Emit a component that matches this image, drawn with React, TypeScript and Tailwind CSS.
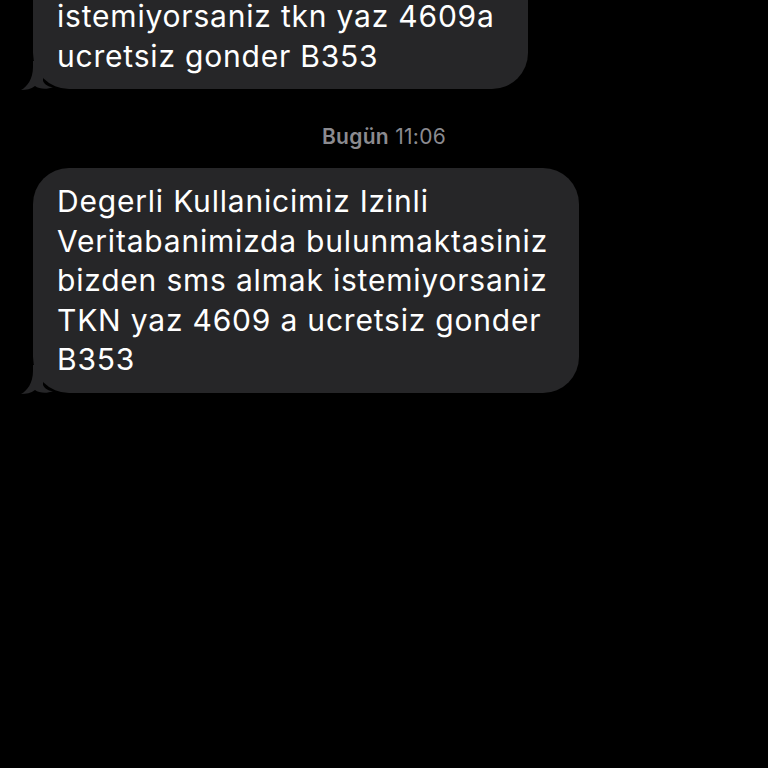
import React from "react";

function Tail() {
  return (
    <svg
      className="absolute left-[-12px] bottom-[-2px]"
      width="40"
      height="30"
      viewBox="0 0 40 30"
    >
      <path
        d="M12 0 L22 0 L22 20 C24 24 28 26 32 26 C26 29 18 28 14 25 C10 28 5 29 0 29 C6 26 12 18 12 6 Z"
        fill="#262628"
      />
    </svg>
  );
}

export default function App() {
  return (
    <div
      className="w-[768px] h-[768px] bg-black overflow-hidden flex flex-col"
      style={{ fontFamily: "Inter, 'Noto Sans', sans-serif" }}
    >
      <div className="pl-[33px] mt-[-60px]">
        <div className="relative inline-block bg-[#262628] rounded-[36px] pt-[57px] pb-[13px] pl-[24px] pr-[33px] text-white text-[30px] leading-[39.5px] tracking-[0.8px]">
          <div className="whitespace-nowrap">istemiyorsaniz tkn yaz 4609a</div>
          <div className="whitespace-nowrap">ucretsiz gonder B353</div>
          <Tail />
        </div>
      </div>
      <div className="mt-[36px] text-center text-[21px] leading-[24px] tracking-[0.3px] text-[#8b8b90]">
        <span className="font-semibold">Bugün</span> <span>11:06</span>
      </div>
      <div className="pl-[33px] mt-[19px]">
        <div className="relative inline-block bg-[#262628] rounded-[36px] pt-[14px] pb-[13px] pl-[24px] pr-[31px] text-white text-[30px] leading-[39.5px] tracking-[0.8px]">
          <div className="whitespace-nowrap">Degerli Kullanicimiz Izinli</div>
          <div className="whitespace-nowrap">Veritabanimizda bulunmaktasiniz</div>
          <div className="whitespace-nowrap">bizden sms almak istemiyorsaniz</div>
          <div className="whitespace-nowrap">TKN yaz 4609 a ucretsiz gonder</div>
          <div className="whitespace-nowrap">B353</div>
          <Tail />
        </div>
      </div>
    </div>
  );
}
